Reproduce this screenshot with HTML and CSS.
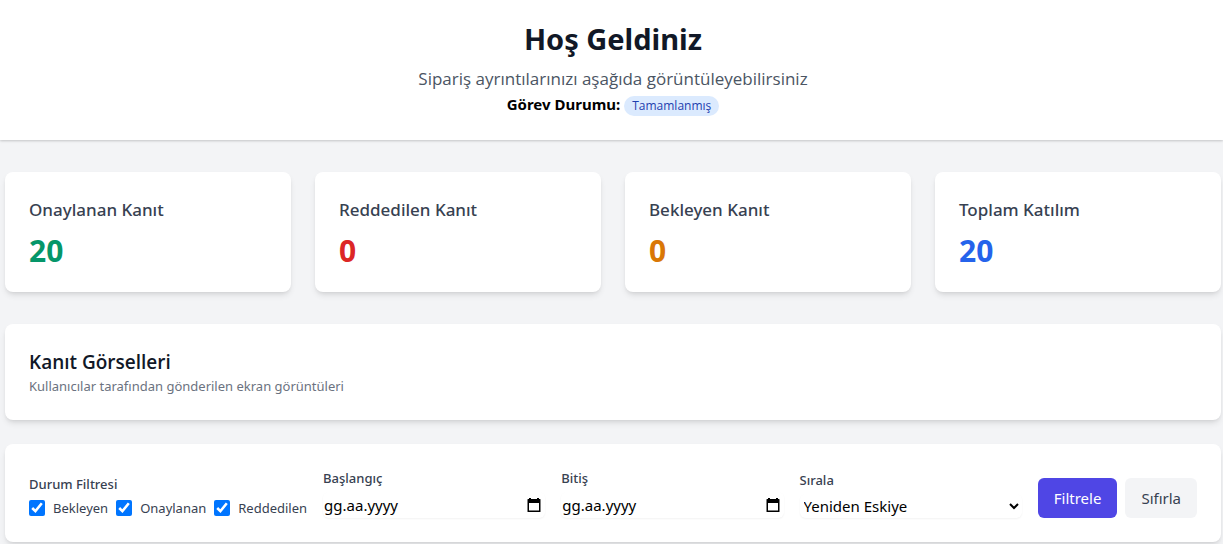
FILE: index.html
```html
<!DOCTYPE html>
<html lang="tr">
<head>
<meta charset="utf-8">
<meta name="viewport" content="width=device-width, initial-scale=1">
<title>Hoş Geldiniz</title>
<link rel="stylesheet" href="styles.css">
</head>
<body>
<header class="header">
  <h1 class="header-title">Hoş Geldiniz</h1>
  <p class="header-lead">Sipariş ayrıntılarınızı aşağıda görüntüleyebilirsiniz</p>
  <div class="header-status"><strong>Görev Durumu:</strong> <span class="badge">Tamamlanmış</span></div>
</header>
<main class="main">
  <section class="stats">
    <article class="card"><h3 class="stat-label">Onaylanan Kanıt</h3><p class="stat-value green">20</p></article>
    <article class="card"><h3 class="stat-label">Reddedilen Kanıt</h3><p class="stat-value red">0</p></article>
    <article class="card"><h3 class="stat-label">Bekleyen Kanıt</h3><p class="stat-value amber">0</p></article>
    <article class="card"><h3 class="stat-label">Toplam Katılım</h3><p class="stat-value blue">20</p></article>
  </section>
  <section class="card intro">
    <h2 class="intro-title">Kanıt Görselleri</h2>
    <p class="intro-text">Kullanıcılar tarafından gönderilen ekran görüntüleri</p>
  </section>
  <form class="card filters">
    <fieldset class="checks">
      <legend class="field-label">Durum Filtresi</legend>
      <div class="check-row">
        <label class="check"><input type="checkbox" checked>Bekleyen</label>
        <label class="check"><input type="checkbox" checked>Onaylanan</label>
        <label class="check"><input type="checkbox" checked>Reddedilen</label>
      </div>
    </fieldset>
    <div class="field">
      <label class="field-label" for="start">Başlangıç</label>
      <div class="date">
        <input id="start" type="text" placeholder="gg.aa.yyyy">
        <svg viewBox="0 0 14 14" aria-hidden="true"><path fill-rule="evenodd" d="M2 0h2v1h6V0h2v1h1q.5 0 .5.5v12q0 .5-.5.5H1q-.5 0-.5-.5v-12Q.5 1 1 1h1zM2 5v7.500h10V5z"/></svg>
      </div>
    </div>
    <div class="field">
      <label class="field-label" for="end">Bitiş</label>
      <div class="date">
        <input id="end" type="text" placeholder="gg.aa.yyyy">
        <svg viewBox="0 0 14 14" aria-hidden="true"><path fill-rule="evenodd" d="M2 0h2v1h6V0h2v1h1q.5 0 .5.5v12q0 .5-.5.5H1q-.5 0-.5-.5v-12Q.5 1 1 1h1zM2 5v7.500h10V5z"/></svg>
      </div>
    </div>
    <div class="field">
      <label class="field-label" for="sort">Sırala</label>
      <select id="sort" class="select"><option>Yeniden Eskiye</option></select>
    </div>
    <div class="actions">
      <button class="btn primary" type="submit">Filtrele</button>
      <button class="btn" type="reset">Sıfırla</button>
    </div>
  </form>
</main>
</body>
</html>
```
FILE: styles.css
```css
* { box-sizing: border-box; margin: 0; }
body {
  background: #f3f4f6;
  color: #000;
  font: 15px/24px "Noto Sans", "Open Sans", sans-serif;
}
.header {
  padding: 21px 22px 24px 25px;
  background: #fff;
  text-align: center;
  box-shadow: 0 1px 3px rgba(0, 0, 0, .1), 0 1px 2px rgba(0, 0, 0, .1);
}
.header-title { font-size: 29px; line-height: 36px; font-weight: 700; color: #111827; }
.header-lead {
  margin-top: 8px;
  font-family: "Open Sans", "Noto Sans", sans-serif;
  font-size: 17px;
  line-height: 27px;
  color: #4b5563;
}
.header-status { height: 24px; }
.header-status strong { font-weight: 700; }
.badge {
  display: inline-block;
  padding: 2px 8px;
  border-radius: 10px;
  background: #dbeafe;
  color: #1e40af;
  font-family: "Open Sans", "Noto Sans", sans-serif;
  font-size: 12px;
  line-height: 16px;
  font-weight: 500;
}
.main { padding: 32px 2px 2px 5px; }
.card {
  padding: 24px;
  border-radius: 8px;
  background: #fff;
  box-shadow: 0 4px 6px -1px rgba(0, 0, 0, .1), 0 2px 4px -2px rgba(0, 0, 0, .1);
}
.stats { display: grid; grid-template-columns: repeat(4, 1fr); gap: 24px; }
.stat-label { font-size: 17px; line-height: 28px; font-weight: 500; color: #374151; }
.stat-value { padding-top: 10px; font-size: 30px; line-height: 34px; font-weight: 700; }
.green { color: #059669; }
.red { color: #dc2626; }
.amber { color: #d97706; }
.blue { color: #2563eb; }
.intro { margin-top: 32px; }
.intro-title {
  font-family: "Open Sans", "Noto Sans", sans-serif;
  font-size: 19px;
  line-height: 28px;
  font-weight: 600;
  color: #111827;
}
.intro-text { font-size: 13px; line-height: 20px; color: #6b7280; }
.filters { display: flex; align-items: flex-end; gap: 16px; margin-top: 24px; }
.checks { min-width: 0; padding: 0; border: 0; }
.check-row { display: flex; gap: 8px; margin-top: 4px; }
.check { display: flex; align-items: center; gap: 8px; font-size: 13px; line-height: 20px; color: #374151; }
.check input { width: 16px; height: 16px; margin: 0; accent-color: #0075ff; }
.field { flex: 1; min-width: 0; }
.field-label { display: block; padding: 0; font-size: 13px; line-height: 20px; font-weight: 500; color: #374151; }
.date { position: relative; margin-top: 4px; }
.date input, .select {
  display: block;
  width: 100%;
  border: 0;
  border-radius: 6px;
  background: #fff;
  color: #000;
  font: inherit;
  box-shadow: 0 1px 2px rgba(0, 0, 0, .05);
}
.date input { height: 26px; padding: 0 32px 0 1px; }
.date input::placeholder { color: #000; opacity: 1; }
.date svg { position: absolute; right: 4px; top: 6px; width: 14px; height: 14px; }
.select { height: 24px; margin-top: 4px; }
.actions { display: flex; gap: 8px; }
.btn {
  padding: 8px 16px;
  border: 0;
  border-radius: 6px;
  background: #f3f4f6;
  color: #374151;
  font: inherit;
}
.primary { background: #4f46e5; color: #fff; }
@media (max-width: 900px) {
  .stats { grid-template-columns: repeat(2, 1fr); }
  .filters { flex-wrap: wrap; }
}
```
